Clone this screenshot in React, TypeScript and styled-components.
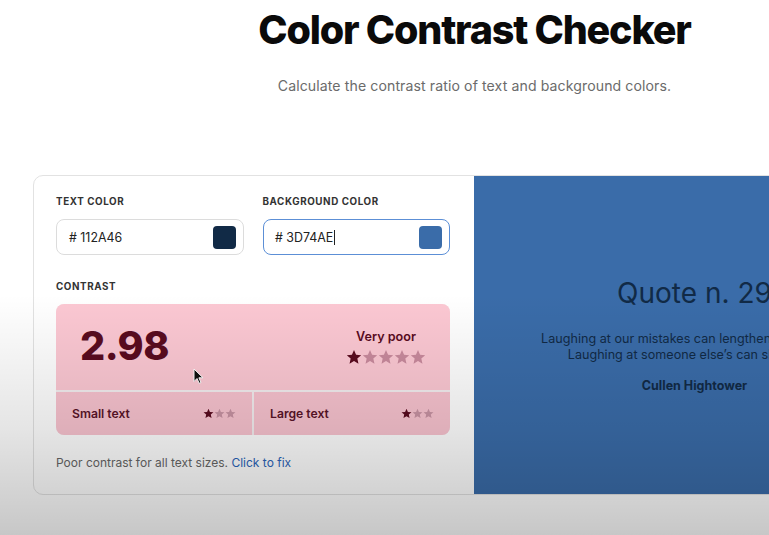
import React from "react";
import styled, { createGlobalStyle } from "styled-components";

const GlobalStyle = createGlobalStyle`
  html, body {
    margin: 0;
    padding: 0;
    background: #ffffff;
    overflow: hidden;
    font-family: Inter, "Noto Sans", "Liberation Sans", sans-serif;
    -webkit-font-smoothing: antialiased;
  }
  #root { width: 769px; height: 535px; overflow: hidden; position: relative; }
`;

const Page = styled.div`
  width: 883px;
  margin-left: 33px;
  padding-top: 6px;
  display: flex;
  flex-direction: column;
  align-items: center;
`;

const Title = styled.h1`
  margin: 0;
  font-size: 39.5px;
  line-height: 48px;
  font-weight: 800;
  letter-spacing: -1.2px;
  color: #0a0a0a;
`;

const Subtitle = styled.p`
  margin: 23px 0 0;
  font-size: 14.1px;
  line-height: 18px;
  color: #6b6b6b;
  letter-spacing: 0.1px;
`;

const Card = styled.section`
  margin-top: 80px;
  width: 883px;
  height: 320px;
  box-sizing: border-box;
  border: 1px solid #e2e2e2;
  border-radius: 10px;
  overflow: hidden;
  display: grid;
  grid-template-columns: 440px 1fr;
  background: #ffffff;
`;

const Controls = styled.div`
  padding: 20px 24px 0 22px;
  display: flex;
  flex-direction: column;
`;

const Fields = styled.div`
  display: grid;
  grid-template-columns: 1fr 1fr;
  column-gap: 19px;
`;

const Field = styled.div`
  display: flex;
  flex-direction: column;
`;

const Label = styled.div<{ $top?: number }>`
  font-size: 9.8px;
  line-height: 12px;
  font-weight: 700;
  letter-spacing: 0.6px;
  text-transform: uppercase;
  color: #333;
  margin-top: ${(p) => p.$top ?? 0}px;
  margin-bottom: 11px;
`;

const InputBox = styled.div<{ $focused?: boolean }>`
  height: 36px;
  box-sizing: border-box;
  border: ${(p) => (p.$focused ? "1.5px solid #5c8fd6" : "1px solid #dcdcdc")};
  border-radius: 8px;
  display: flex;
  align-items: center;
  justify-content: space-between;
  padding: 0 7px 0 ${(p) => (p.$focused ? 11.5 : 12)}px;
  background: #fff;
`;

const HexText = styled.span`
  font-size: 12.4px;
  color: #222;
  display: flex;
  align-items: center;
`;

const Caret = styled.span`
  display: inline-block;
  width: 1px;
  height: 15px;
  background: #222;
  margin-left: 1px;
`;

const Swatch = styled.div<{ $color: string }>`
  width: 23px;
  height: 23px;
  border-radius: 4px;
  background: ${(p) => p.$color};
`;

const ContrastBox = styled.div`
  display: grid;
  grid-template-columns: 1fr 1fr;
  grid-template-rows: 86px 43px;
  gap: 2px;
  border-radius: 8px;
  overflow: hidden;
  background: #f4eef0;
`;

const ScoreRow = styled.div`
  grid-column: 1 / span 2;
  background: #fcc8d3;
  display: flex;
  align-items: center;
  justify-content: space-between;
  padding: 0 24px;
  position: relative;
`;

const Ratio = styled.div`
  font-size: 39.5px;
  font-weight: 800;
  color: #5a0b1f;
  letter-spacing: -0.5px;
  line-height: 1;
`;

const Rating = styled.div`
  display: flex;
  flex-direction: column;
  align-items: center;
  gap: 5px;
`;

const RatingLabel = styled.div`
  font-size: 12.6px;
  font-weight: 600;
  color: #5a0b1f;
`;

const Stars = styled.div<{ $gap: number }>`
  display: flex;
  gap: ${(p) => p.$gap}px;
`;

const Cell = styled.div`
  background: #f8c3cf;
  display: flex;
  align-items: center;
  justify-content: space-between;
  padding: 0 16px;
`;

const CellLabel = styled.span`
  font-size: 12.2px;
  font-weight: 600;
  color: #5a1428;
`;

const Footer = styled.p`
  margin: 20px 0 0;
  font-size: 12px;
  line-height: 16px;
  color: #666;
`;

const FixLink = styled.a`
  color: #2a63b8;
  text-decoration: none;
  cursor: pointer;
`;

const Preview = styled.div`
  background: #3a6ca9;
  display: flex;
  flex-direction: column;
  align-items: center;
  justify-content: center;
  color: #112a46;
  text-align: center;
  padding-bottom: 1px;
`;

const QuoteTitle = styled.div`
  font-size: 28px;
  line-height: 34px;
  font-weight: 400;
`;

const QuoteText = styled.p`
  margin: 21px 0 0;
  font-size: 12.6px;
  line-height: 16px;
  white-space: nowrap;
`;

const Author = styled.div`
  margin-top: 15px;
  font-size: 12.5px;
  line-height: 16px;
  font-weight: 700;
`;

const Pointer = styled.svg`
  position: absolute;
  left: 137px;
  top: 64px;
`;

const Vignette = styled.div`
  position: absolute;
  inset: 0;
  pointer-events: none;
  background: linear-gradient(
    to bottom,
    rgba(0, 0, 0, 0) 0%,
    rgba(0, 0, 0, 0) 55%,
    rgba(0, 0, 0, 0.1) 80%,
    rgba(0, 0, 0, 0.22) 100%
  );
`;

const Star: React.FC<{ size: number; color: string }> = ({ size, color }) => (
  <svg width={size} height={size} viewBox="0 0 24 24">
    <path
      d="M12 1.5l3.1 7.1 7.7.7-5.8 5.1 1.7 7.6L12 18l-6.7 4 1.7-7.6-5.8-5.1 7.7-.7z"
      fill={color}
    />
  </svg>
);

const StarRow: React.FC<{ total: number; filled: number; size: number; gap: number; faded: string }> = ({
  total,
  filled,
  size,
  gap,
  faded,
}) => (
  <Stars $gap={gap}>
    {Array.from({ length: total }).map((_, i) => (
      <Star key={i} size={size} color={i < filled ? "#5a0b1f" : faded} />
    ))}
  </Stars>
);

export default function App() {
  return (
    <>
      <GlobalStyle />
      <Page>
        <Title>Color Contrast Checker</Title>
        <Subtitle>Calculate the contrast ratio of text and background colors.</Subtitle>
        <Card>
          <Controls>
            <Fields>
              <Field>
                <Label>Text color</Label>
                <InputBox>
                  <HexText># 112A46</HexText>
                  <Swatch $color="#112a46" />
                </InputBox>
              </Field>
              <Field>
                <Label>Background color</Label>
                <InputBox $focused>
                  <HexText>
                    # 3D74AE
                    <Caret />
                  </HexText>
                  <Swatch $color="#3a6ca9" />
                </InputBox>
              </Field>
            </Fields>
            <Label $top={26}>Contrast</Label>
            <ContrastBox>
              <ScoreRow>
                <Ratio>2.98</Ratio>
                <Rating>
                  <RatingLabel>Very poor</RatingLabel>
                  <StarRow total={5} filled={1} size={16} gap={0} faded="#c98a9d" />
                </Rating>
                <Pointer width="11" height="16" viewBox="0 0 11 16">
                  <path d="M1 1v12.5l3-3 2.2 4.8 1.8-.8-2.1-4.7H10z" fill="#111" stroke="#fff" strokeWidth="1" />
                </Pointer>
              </ScoreRow>
              <Cell>
                <CellLabel>Small text</CellLabel>
                <StarRow total={3} filled={1} size={11} gap={0} faded="#c893a3" />
              </Cell>
              <Cell>
                <CellLabel>Large text</CellLabel>
                <StarRow total={3} filled={1} size={11} gap={0} faded="#c893a3" />
              </Cell>
            </ContrastBox>
            <Footer>
              Poor contrast for all text sizes. <FixLink>Click to fix</FixLink>
            </Footer>
          </Controls>
          <Preview>
            <QuoteTitle>Quote n. 29</QuoteTitle>
            <QuoteText>
              Laughing at our mistakes can lengthen our own life.
              <br />
              Laughing at someone else’s can shorten it.
            </QuoteText>
            <Author>Cullen Hightower</Author>
          </Preview>
        </Card>
      </Page>
      <Vignette />
    </>
  );
}
